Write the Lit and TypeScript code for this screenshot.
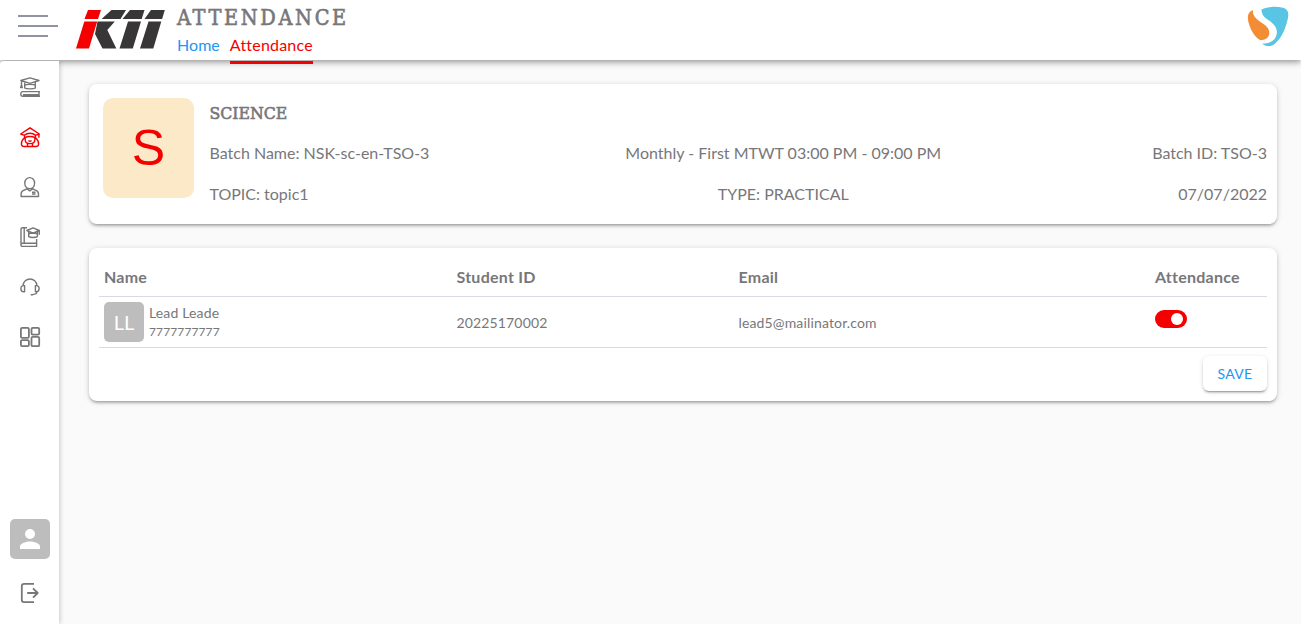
import { LitElement, html, svg, css } from "lit";
import { customElement, property } from "lit/decorators.js";

const icons: Record<string, unknown> = {
  course: svg`<path d="M.8 3.500 10 .8l9 2.700L10 6.300zM4.700 5v6c1.500 1.200 9.100 1.200 10.600 0V5M4.700 8.300c1.500-1.300 9.100-1.300 10.600 0M1.500 3.800v4M.6 10.600l.9-3 .8 3zM20 14.600H2.600C.2 14.600.2 19.300 2.600 19.300H20M19 14.800v4.400M3 17.800h16"/>`,
  student: svg`<path d="M.7 7 10 .8 19.300 7l-3.800 1.300C12.500 5.600 7.500 5.600 4.500 8.300zM18.900 7.200v3.600M4.500 8.300v2.400C2.300 12.500 1.300 15 1.400 17.300c.1 1.500 1.400 2.200 3 2.200h11.200c1.600 0 2.900-.7 3-2.200.1-2.300-.9-4.800-3.100-6.600V8.300M5.200 10.600c2-1.500 7.600-1.500 9.600 0v2.100c0 5.200-9.600 5.200-9.600 0zM7.500 16.400v2.800M12.500 16.400v2.800M8.500 13.500c.9.900 2.100.9 3 0"/>`,
  teacher: svg`<path d="M4.800 6.200c0-7.400 9.800-7.400 9.800 0 0 7.300-9.800 7.300-9.800 0zM7 11.200c-.4 1.300-1.500 1.500-3 2-2 .7-2.900 2-2.900 4v2.300h17.400v-2.300c0-2-1-3.300-3-4-1.500-.5-2.500-.7-2.900-2M7 12l2.800 2 2.700-2M12 15.300h3.500M12 17h3.500"/>`,
  library: svg`<path d="M17.300 19.400H2.700C.2 19.400.2 16.300 2.700 16.300h13.900v3M1 17.500V2.500C1 1.200 1.800.7 2.800.7H7M4.200.9v15.300M16.600 12v4.200M6.800 3.500 13 .8l6.300 2.700L13 6.200zM8.700 4.800v4.600c1.300 1.400 7.400 1.400 8.700 0V4.800M8.700 7c2-1.400 6.700-1.400 8.700 0M19.300 3.700v4"/>`,
  support: svg`<path d="M3 8.900C3.300-.3 16.700-.3 17 8.900M3.600 8.600C1.700 8.600.9 9.600.9 11.600s.8 3.200 2.700 3.200h1V8.600zM16.400 8.600c1.900 0 2.700 1 2.700 3s-.8 3.200-2.700 3.200h-1V8.600zM17 14.800c-.2 1.900-1.700 2.700-4.200 2.700M12.900 17.700h-2.200"/>`,
  apps: svg`<rect x=".9" y=".9" width="8" height="10" rx="1.300"/><rect x="11.500" y=".9" width="7.700" height="6.700" rx="1.300"/><rect x=".9" y="13.100" width="8" height="6" rx="1.300"/><rect x="11.500" y="9.800" width="7.700" height="9.400" rx="1.300"/>`,
  logout: svg`<path d="M14 .9H4.200C2.700.9 1.800 1.500 1.800 3v14c0 1.500.9 2.100 2.400 2.100H14M7.200 10h10.600M13 5.300l4.700 4.700-4.700 4.700"/>`,
};

@customElement("line-icon")
class LineIcon extends LitElement {
  @property() name = "";
  static styles = css`
    :host { display: block; width: 20px; height: 20px; }
    svg { display: block; fill: none; stroke: currentColor; stroke-width: 1.4; stroke-linejoin: round; overflow: visible; }
    .bold { stroke-width: 1.8; }
  `;
  render() {
    const bold = ["apps", "logout"].includes(this.name) ? "bold" : "";
    return html`<svg class=${bold} width="20" height="20" viewBox="0 0 20 20">${icons[this.name]}</svg>`;
  }
}

@customElement("app-root")
class AppRoot extends LitElement {
  static styles = css`
    * { box-sizing: border-box; }
    :host {
      display: flex; flex-direction: column; height: 100vh; overflow: hidden;
      background: #fafafa; color: #77777a;
      font: 400 16px/24px Lato, sans-serif; letter-spacing: 0.15px;
    }
    header {
      position: relative; z-index: 1; flex: none; height: 60px; display: flex; background: #fff;
      box-shadow: 0 2px 4px -1px rgba(0,0,0,.2), 0 4px 5px rgba(0,0,0,.14), 0 1px 10px rgba(0,0,0,.12);
    }
    .burger { margin: 15px 0 0 18px; width: 40px; height: 22px; display: flex; flex-direction: column; gap: 8px; }
    .burger i { height: 2px; width: 30px; background: #9193a2; }
    .burger i:nth-child(2) { width: 40px; }
    .logo { margin: 9px 0 0 18px; width: 89px; height: 40px; }
    .title { margin-left: 12px; }
    h1, h2 { margin: 0; font-family: "Roboto Slab", "DejaVu Serif Condensed", "DejaVu Serif", serif; font-stretch: condensed; }
    h1 { font-size: 21.5px; font-weight: 400; line-height: 36px; height: 33px; letter-spacing: 2.65px; -webkit-text-stroke: .6px; }
    nav { display: flex; gap: 10px; }
    nav a { height: 31px; line-height: 24px; color: #2196f3; }
    nav a:first-child { letter-spacing: .05px; }
    nav .active { color: #f50000; border-bottom: 3px solid #f50000; letter-spacing: .2px; }
    .brand { margin: 6px 12px 0 auto; width: 42px; height: 42px; }
    .body { flex: 1; display: flex; min-height: 0; }
    aside {
      position: relative; z-index: 2; flex: none; width: 59.300px; margin: 1px .7px 0 0; padding: 16px 9.300px 21px 10px;
      display: flex; flex-direction: column; align-items: flex-start; gap: 30px; background: #fff;
      border-radius: 4px 0 0; box-shadow: 1px 0 5px rgba(0,0,0,.2); clip-path: inset(0 -10px 0 0);
    }
    line-icon { margin-left: 10px; }
    .on { color: #f50000; }
    .user { flex: none; width: 40px; height: 40px; margin: auto 0 -6px; border-radius: 5px; background: #bdbdbd; }
    main { flex: 1; padding: 24px 24px 0 29px; display: flex; flex-direction: column; gap: 24px; }
    .card {
      background: #fff; border-radius: 8px;
      box-shadow: 0 3px 3px -2px rgba(0,0,0,.2), 0 2px 3px rgba(0,0,0,.14), 0 1px 6px rgba(0,0,0,.14);
    }
    .batch { height: 140px; padding: 14px 10px 14px 14px; display: flex; gap: 15.500px; }
    .initial {
      width: 91px; height: 100px; border-radius: 10px; background: #fce9c7; color: #f50000;
      font: 50px/100px "Liberation Sans", Arial, sans-serif; text-align: center; letter-spacing: 0;
    }
    .info { flex: 1; }
    h2 { font-size: 17.5px; line-height: 31px; height: 31px; font-weight: 400; letter-spacing: 0; -webkit-text-stroke: .6px; }
    .facts { display: grid; grid-template-columns: 219px 1fr 129px; grid-auto-rows: 41px; line-height: 47px; letter-spacing: 0; white-space: nowrap; }
    .facts > :nth-child(3n + 2) { text-align: center; }
    .facts > :nth-child(3n) { text-align: right; }
    .list { height: 153px; padding: 10px; }
    .row {
      display: grid; grid-template-columns: 352.5px 282px 416.500px 1fr; align-items: center;
      height: 51px; padding: 0 5px; border-bottom: 1px solid #d9dae3; font-size: 14px; letter-spacing: .15px;
    }
    .row.head { height: 39px; font-size: 16px; font-weight: 700; letter-spacing: .25px; }
    .person { display: flex; gap: 5px; }
    .avatar { width: 40px; height: 40px; border-radius: 5px; background: #bdbdbd; color: #fff; font-size: 20px; line-height: 41px; text-align: center; letter-spacing: 0; }
    .person div { line-height: 22px; }
    .person .phone { font-size: 12px; line-height: 15px; letter-spacing: .12px; }
    .cell { padding-top: 2px; }
    .toggle { width: 32px; height: 18px; margin-bottom: 7px; padding: 3px 4px; border-radius: 9px; background: #f50000; display: flex; justify-content: flex-end; }
    .toggle i { width: 12px; height: 12px; border-radius: 50%; background: #fff; }
    button {
      display: block; margin: 8px 0 0 auto; width: 64px; height: 35px; padding: 0; border: 0; border-radius: 6px;
      background: #fff; color: #2196f3; font: 14px/35px Lato, sans-serif; letter-spacing: .3px;
      box-shadow: 0 3px 1px -2px rgba(0,0,0,.2), 0 2px 2px rgba(0,0,0,.14), 0 1px 5px rgba(0,0,0,.12);
    }
  `;

  private menu = ["course", "student", "teacher", "library", "support", "apps"];
  private facts = [
    "Batch Name: NSK-sc-en-TSO-3", "Monthly - First MTWT 03:00 PM - 09:00 PM", "Batch ID: TSO-3",
    "TOPIC: topic1", "TYPE: PRACTICAL", "07/07/2022",
  ];

  render() {
    return html`
      <header>
        <div class="burger"><i></i><i></i><i></i></div>
        <svg class="logo" viewBox="0 0 89 40">
          <path fill="#f50000" d="M12 1H25l-3 9H8.500zM8.300 12.500h12.900L13 39.500H0z"/>
          <path fill="#383637" d="M35.500 1H50l-5.500 9H25.600zM54 1h14.500l-2.800 9H46.500zM75 1h13.800l-2.700 9H68.500zM21.500 12.500h17.300L31.300 21l9 18.500H26.500L19 25zM52 12.500h13l-8.200 27H43.500zM72.500 12.500h12.800L77.300 39.500H64z"/>
        </svg>
        <div class="title">
          <h1>ATTENDANCE</h1>
          <nav><a>Home</a><a class="active">Attendance</a></nav>
        </div>
        <svg class="brand" viewBox="0 0 42 42">
          <path fill="#f28c35" d="M6 4C0 6 .2 12 2 18c2 7 6 13 11 16 5 .5 9-2.500 9.300-6.500C22.500 23 20 20 15 17 9 13 5 9 6 4z"/>
          <path fill="#57c5e3" d="M14.500 3.500C21 .5 29 .2 36 1.800c5.500 1.600 6.200 6 4.500 12.200C38 25 33 34 27 38.500c-4 2.500-8.500 2-12-.8 7.500.2 13-3 14.500-8.700 1.500-6-1.500-10.500-7.500-14.500-5-3.300-7.500-6-7.500-11z"/>
        </svg>
      </header>
      <div class="body">
        <aside>
          ${this.menu.map((m) => html`<line-icon class=${m === "student" ? "on" : ""} name=${m}></line-icon>`)}
          <svg class="user" viewBox="0 0 40 40" fill="#fff"><circle cx="20" cy="15" r="5"/><path d="M10 30v-2.500c0-3.300 6.700-5 10-5s10 1.700 10 5V30z"/></svg>
          <line-icon name="logout"></line-icon>
        </aside>
        <main>
          <section class="card batch">
            <div class="initial">S</div>
            <div class="info">
              <h2>SCIENCE</h2>
              <div class="facts">${this.facts.map((f) => html`<span>${f}</span>`)}</div>
            </div>
          </section>
          <section class="card list">
            <div class="row head"><span>Name</span><span>Student ID</span><span>Email</span><span>Attendance</span></div>
            <div class="row">
              <div class="person">
                <span class="avatar">LL</span>
                <div>Lead Leade<div class="phone">7777777777</div></div>
              </div>
              <span class="cell">20225170002</span>
              <span class="cell">lead5@mailinator.com</span>
              <span class="toggle"><i></i></span>
            </div>
            <button>SAVE</button>
          </section>
        </main>
      </div>
    `;
  }
}
